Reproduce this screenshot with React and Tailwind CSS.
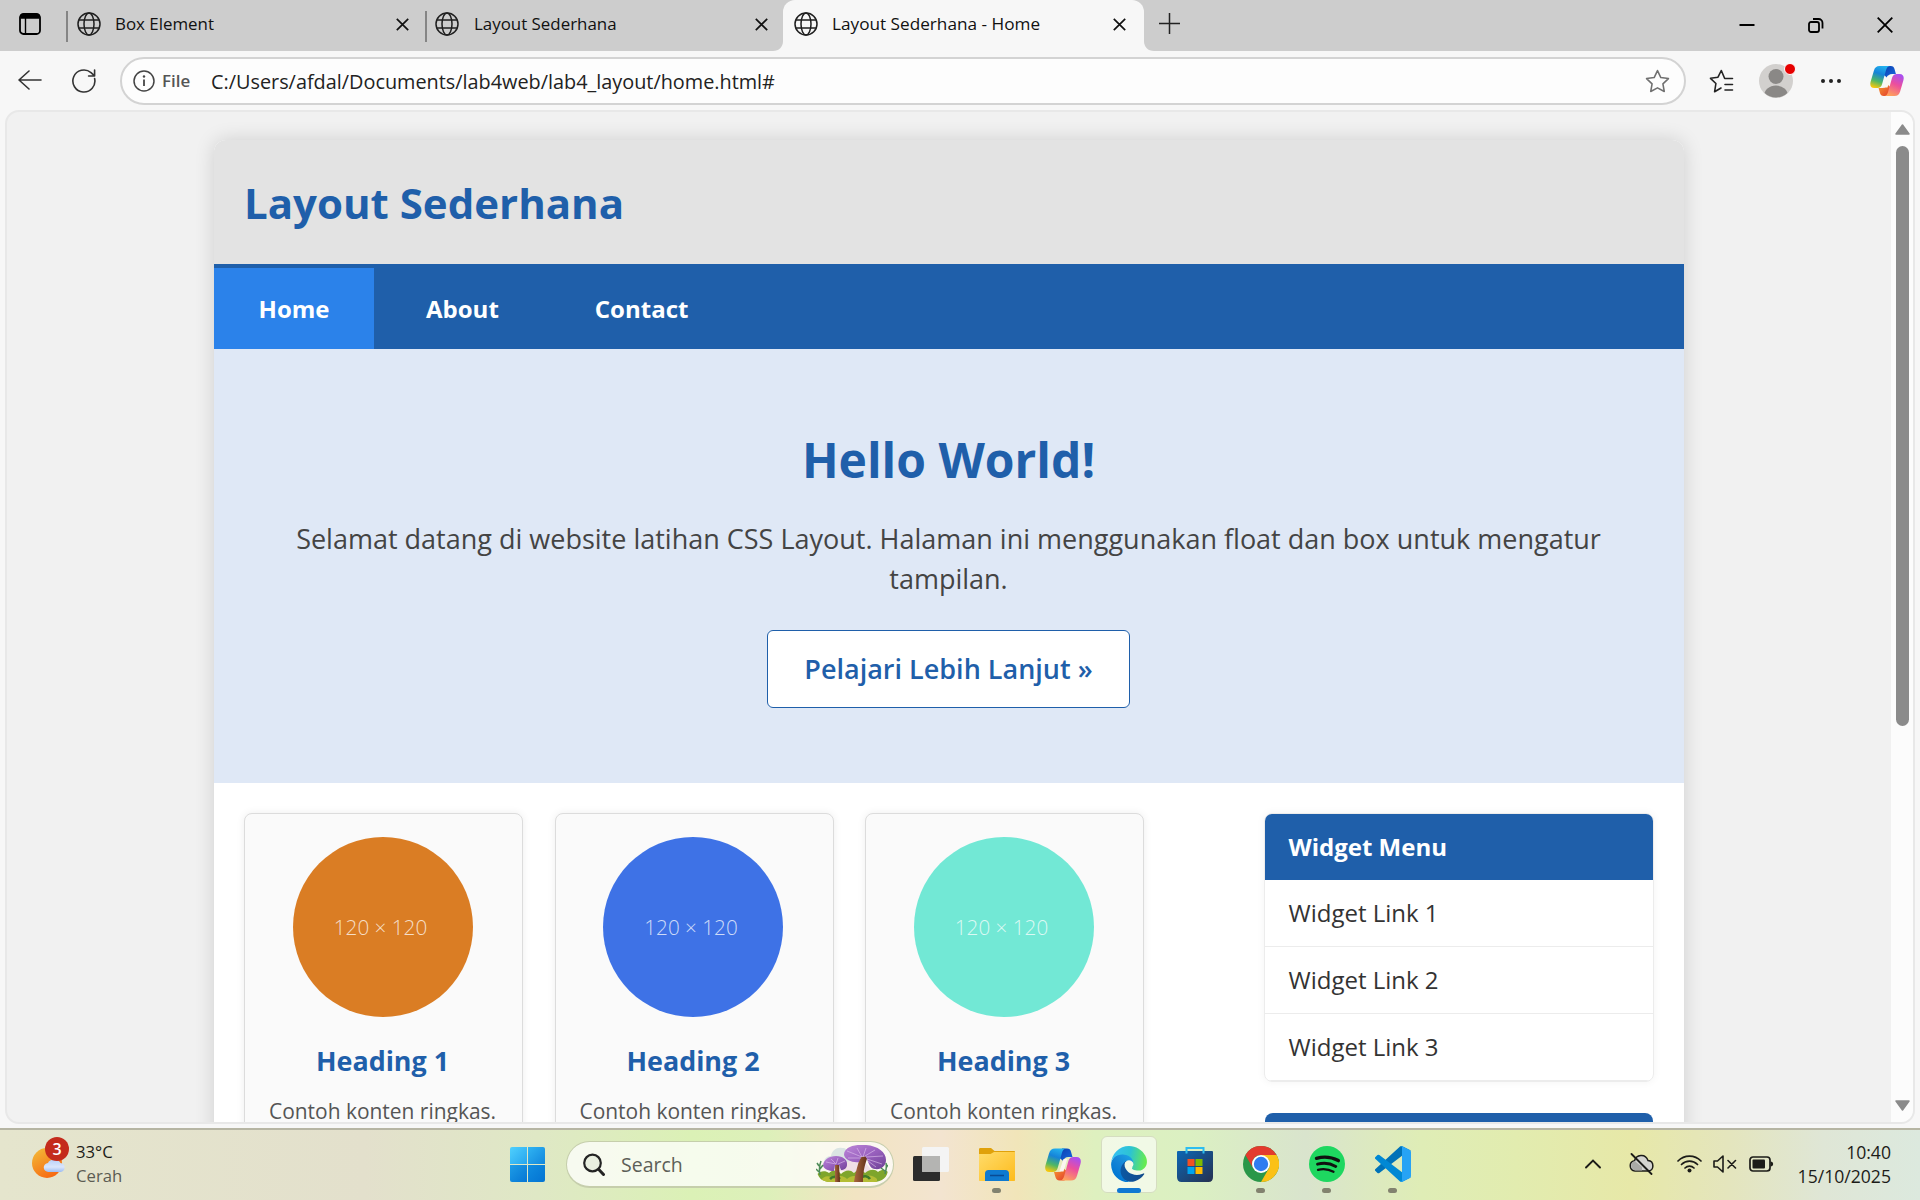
const Globe = () => (
  <svg className="h-6 w-6 shrink-0" viewBox="0 0 24 24" fill="none" stroke="#1f1f1f" strokeWidth="1.5">
    <circle cx="12" cy="12" r="11" />
    <ellipse cx="12" cy="12" rx="5" ry="11" />
    <path d="M2 8h20M2 16h20" />
  </svg>
);

const Close = () => (
  <svg className="h-[13px] w-[13px] shrink-0" viewBox="0 0 13 13" stroke="#111" strokeWidth="1.7">
    <path d="M.8.8l11.4 11.4M12.2.8L.8 12.2" />
  </svg>
);

const Copilot = ({ className, id }) => (
  <svg className={className} viewBox="0 0 36 32" fill="none">
    <defs>
      <linearGradient id={id + "a"} x1="0.6" y1="0" x2="0.3" y2="1">
        <stop offset="0" stopColor="#22b0ee" />
        <stop offset=".35" stopColor="#1683d8" />
        <stop offset=".7" stopColor="#4fb765" />
        <stop offset="1" stopColor="#f6c70d" />
      </linearGradient>
      <linearGradient id={id + "b"} x1="0.7" y1="0" x2="0.3" y2="1">
        <stop offset="0" stopColor="#a94ff0" />
        <stop offset=".45" stopColor="#ec4f9d" />
        <stop offset="1" stopColor="#ffa35a" />
      </linearGradient>
      <linearGradient id={id + "c"} x1="0" y1="0" x2="1" y2="1">
        <stop offset="0" stopColor="#0b3fae" />
        <stop offset="1" stopColor="#1769e0" />
      </linearGradient>
      <linearGradient id={id + "d"} x1="0" y1="0" x2="1" y2="1">
        <stop offset="0" stopColor="#f79b2e" />
        <stop offset="1" stopColor="#e2382d" />
      </linearGradient>
    </defs>
    <path d="M17 0h5c2.400 0 3.400 1.200 4 3.200l1.500 5.300h-4c-3 0-4.500 1.300-5.300 4L14 9z" fill={"url(#" + id + "c)"} />
    <path d="M19.500 32h-5c-2.400 0-3.400-1.200-4-3.200L9 23.500h4c3 0 4.500-1.300 5.300-4L22 23z" fill={"url(#" + id + "d)"} />
    <path d="M10 0h11c-2.300.4-3.200 1.700-4 4.300l-4.300 15.200c-.8 2.800-2.200 4-5 4H4.500C.7 23.500-.5 20.500.5 16.800L4 5C5 1.600 6.800 0 10 0z" fill={"url(#" + id + "a)"} />
    <path d="M26 32H15.500c2-.4 2.900-1.800 3.600-4.200l4.300-15.200c.8-2.800 2.200-4.100 5-4.100h3.100c3.800 0 5 3 4 6.700L32 27.200c-1 3.300-2.800 4.800-6 4.800z" fill={"url(#" + id + "b)"} />
    <path d="M18.500 10.500h3.800l-3.800 12.500h-4.200z" fill="#fbf6f0" />
  </svg>
);

const StarIcon = () => (
  <svg className="h-[25px] w-[25px] shrink-0" viewBox="0 0 24 24" fill="none" stroke="#707070" strokeWidth="1.5" strokeLinejoin="round">
    <path d="M12 1.500l3.200 6.700 7.300 1-5.300 5.100 1.300 7.300L12 18.100l-6.500 3.500 1.300-7.300L1.500 9.200l7.300-1z" />
  </svg>
);

const tabText = "leading-6 text-[#111] whitespace-nowrap";

function TabBar() {
  return (
    <div className="flex h-[51px] shrink-0 bg-[#cdcdcd]">
      <div className="flex w-[66px] justify-start pt-[13px] pl-[19px]">
        <svg className="h-[22px] w-[22px]" viewBox="0 0 22 22" fill="none" stroke="#000" strokeWidth="1.8">
          <rect x="1" y="1" width="20" height="20" rx="3.500" />
          <path d="M1.500 3.500h19" strokeWidth="4.500" />
          <path d="M6.500 5v15.500" strokeWidth="1.400" />
        </svg>
      </div>
      <div className="flex w-[359px] pt-3">
        <div className="-mt-px mr-[9px] h-[31px] w-[2px] bg-[#858585]" />
        <Globe />
        <span className={"ml-[14px] flex-1 text-[16.900px] " + tabText}>Box Element</span>
        <div className="mt-1.5 mr-4">
          <Close />
        </div>
      </div>
      <div className="flex w-[358px] pt-3">
        <div className="-mt-px mr-[8px] h-[31px] w-[2px] bg-[#858585]" />
        <Globe />
        <span className={"ml-[15px] flex-1 text-[16.900px] " + tabText}>Layout Sederhana</span>
        <div className="mt-1.5 mr-[15px]">
          <Close />
        </div>
      </div>
      <div className="relative flex w-[361px] rounded-t-[12px] bg-[#f7f7f7] pt-3 pl-[11px]">
        <svg className="absolute bottom-0 -left-[10px] h-[10px] w-[10px]" viewBox="0 0 10 10">
          <path d="M10 0v10H0C6 10 10 6 10 0z" fill="#f7f7f7" />
        </svg>
        <svg className="absolute -right-[10px] bottom-0 h-[10px] w-[10px]" viewBox="0 0 10 10">
          <path d="M0 0v10h10C4 10 0 6 0 0z" fill="#f7f7f7" />
        </svg>
        <Globe />
        <span className={"ml-[14px] flex-1 text-[17.200px] " + tabText}>Layout Sederhana - Home</span>
        <div className="mt-1.5 mr-[18px]">
          <Close />
        </div>
      </div>
      <svg className="mt-[13px] ml-[15px] h-[21px] w-[21px]" viewBox="0 0 21 21" stroke="#222" strokeWidth="1.500">
        <path d="M10.500 0v21M0 10.500h21" />
      </svg>
      <div className="ml-auto flex items-start pt-[17px] pr-[27px]">
        <svg className="mr-[53px] h-[16px] w-[16px]" viewBox="0 0 16 16" stroke="#000" strokeWidth="2">
          <path d="M.5 8h15" />
        </svg>
        <svg className="mr-[53px] h-[16px] w-[16px]" viewBox="0 0 16 16" fill="none" stroke="#000" strokeWidth="1.800">
          <rect x="1" y="5" width="10" height="10" rx="2" />
          <path d="M5 2h5.500a4 4 0 014 4v5.500" />
        </svg>
        <svg className="h-[16px] w-[16px]" viewBox="0 0 16 16" stroke="#000" strokeWidth="1.800">
          <path d="M.7.7l14.600 14.600M15.300.7L.7 15.300" />
        </svg>
      </div>
    </div>
  );
}

function Toolbar() {
  return (
    <div className="flex h-[59px] shrink-0 items-start bg-[#f7f7f7] pt-[6px]">
      <svg className="mt-[13px] ml-[18px] h-[20px] w-[24px]" viewBox="0 0 24 20" fill="none" stroke="#333" strokeWidth="1.600" strokeLinecap="round" strokeLinejoin="round">
        <path d="M23 10H1M11 1L1 10l10 9" />
      </svg>
      <svg className="mt-[12px] ml-[30px] h-[24px] w-[24px]" viewBox="0 0 24 24" fill="none" stroke="#333" strokeWidth="1.600" strokeLinecap="round" strokeLinejoin="round">
        <path d="M22.600 9.500A11 11 0 1 1 19 3.600L22.300 6.700M22.600 1v6h-6" />
      </svg>
      <div className="ml-[24px] flex h-[48px] w-[1566px] items-center rounded-full border-2 border-[#d3d3d3] bg-[#fdfdfd] pl-[11px]">
        <svg className="h-[22px] w-[22px]" viewBox="0 0 22 22" fill="none" stroke="#444" strokeWidth="1.500">
          <circle cx="11" cy="11" r="10" />
          <path d="M11 9.500v6.500" strokeWidth="1.800" />
          <circle cx="11" cy="6.500" r="1.200" fill="#444" stroke="none" />
        </svg>
        <span className="ml-[7px] w-[49px] text-[16.900px] font-semibold text-[#555]">File</span>
        <span className="mt-px flex-1 text-[19.850px] text-[#222]">C:/Users/afdal/Documents/lab4web/lab4_layout/home.html#</span>
        <div className="mr-[14px]">
          <StarIcon />
        </div>
      </div>
      <svg className="mt-[12px] ml-[23px] h-[25px] w-[25px]" viewBox="0 0 25 25" fill="none" stroke="#222" strokeWidth="1.600" strokeLinecap="round" strokeLinejoin="round">
        <path d="M23.500 9.500h-7.800L12.300 1.500 9 8.200l-7.500 1.100 5.400 5.200-1.300 8.300 6.400-3.800M16 15.500h7.500M16 21h7.500" />
      </svg>
      <div className="relative mt-[7px] ml-[25px] h-[34px] w-[34px]">
        <svg className="h-[34px] w-[34px]" viewBox="0 0 34 34">
          <defs>
            <clipPath id="avatar">
              <circle cx="17" cy="17" r="16.500" />
            </clipPath>
          </defs>
          <circle cx="17" cy="17" r="17" fill="#d2d0ce" />
          <g clipPath="url(#avatar)" fill="#8a8886">
            <circle cx="17" cy="12.500" r="7.500" />
            <ellipse cx="17" cy="32" rx="12" ry="10.500" />
          </g>
        </svg>
        <div className="absolute -top-[1px] -right-[3px] h-[12px] w-[12px] rounded-full border-[1.500px] border-white bg-[#e60000]" />
      </div>
      <div className="mt-[22px] ml-[28px] flex gap-[4px]">
        <div className="h-1 w-1 rounded-full bg-[#222]" />
        <div className="h-1 w-1 rounded-full bg-[#222]" />
        <div className="h-1 w-1 rounded-full bg-[#222]" />
      </div>
      <Copilot id="cpt" className="mt-[9px] ml-[29px] h-[30px] w-[34px]" />
    </div>
  );
}

function Card({ color, title }) {
  return (
    <div className="flex h-[420px] w-[279px] flex-col items-center rounded-[8px] border border-[#dcdcdc] bg-[#fafafa] pt-[23px] pr-[2px] shadow-[0_0_8px_rgba(0,0,0,0.07)]">
      <div className={"flex h-[180px] w-[180px] items-center justify-center rounded-full pt-px pr-[4px] text-[20.700px] font-light text-white/75 " + color}>
        120 × 120
      </div>
      <h3 className="mt-[24px] text-[26.900px] leading-[40px] font-bold text-[#1f5faa]">{title}</h3>
      <p className="mt-[15px] text-[20.950px] leading-[30px] whitespace-nowrap text-[#555]">Contoh konten ringkas.</p>
    </div>
  );
}

function Page() {
  return (
    <div className="h-[1100px] w-[1470px] shrink-0 rounded-t-[12px] bg-white shadow-[0_0_20px_rgba(0,0,0,0.14)]">
      <header className="flex h-[124px] items-center rounded-t-[12px] bg-[#e3e3e3] pl-[30px]">
        <h1 className="text-[42px] leading-[63px] font-bold text-[#1f5faa]">Layout Sederhana</h1>
      </header>
      <nav className="flex h-[85px] gap-[7px] bg-[#1f5faa] pt-[4px] text-[24px] font-bold text-white">
        <a className="flex w-[160px] items-center justify-center bg-[#2b82ea]">Home</a>
        <a className="flex items-center px-[45px]">About</a>
        <a className="-ml-px flex items-center px-[45px]">Contact</a>
      </nav>
      <section className="flex h-[434px] flex-col items-center bg-[#dfe8f6] pt-[75px] pr-[1px] text-center">
        <h2 className="text-[48px] leading-[72px] font-bold text-[#1f5faa]">Hello World!</h2>
        <p className="mt-[23px] w-[1380px] text-[27px] leading-[40px] text-[#444]">
          Selamat datang di website latihan CSS Layout. Halaman ini menggunakan float dan box untuk mengatur tampilan.
        </p>
        <a className="mt-[31px] flex h-[78px] w-[363px] items-center justify-center rounded-[6px] border border-[#1f5faa] bg-white text-[27px] font-semibold text-[#1f5faa]">
          Pelajari Lebih Lanjut »
        </a>
      </section>
      <div className="flex justify-between px-[30px] pt-[30px]">
        <div className="flex gap-[31.500px]">
          <Card color="bg-[#da7d24]" title="Heading 1" />
          <Card color="bg-[#3e72e6]" title="Heading 2" />
          <Card color="bg-[#72e8d5]" title="Heading 3" />
        </div>
        <aside className="flex w-[390px] flex-col gap-[31px] text-[24px]">
          <div className="overflow-hidden rounded-[8px] border border-[#ececec] shadow-[0_0_8px_rgba(0,0,0,0.05)]">
            <div className="flex h-[66px] items-center bg-[#1f5faa] pl-[23.500px] font-bold text-white">Widget Menu</div>
            <div className="flex h-[67px] items-center border-b border-[#ececec] pl-[23.500px] text-[#333]">Widget Link 1</div>
            <div className="flex h-[67px] items-center border-b border-[#ececec] pl-[23.500px] text-[#333]">Widget Link 2</div>
            <div className="flex h-[67px] items-center border-b border-[#ececec] pl-[23.500px] text-[#333]">Widget Link 3</div>
          </div>
          <div className="mx-px h-[66px] rounded-[8px] bg-[#1f5faa]" />
        </aside>
      </div>
    </div>
  );
}

function Viewport() {
  return (
    <div className="flex h-[1018px] shrink-0 bg-[#f7f7f7] px-[5px]">
      <div className="flex h-[1014px] w-[1910px] overflow-hidden rounded-[14px] border-2 border-[#e8e8e8] bg-[#f1f1f1]">
        <div className="flex flex-1 pt-[28px] pl-[207px]">
          <Page />
        </div>
        <div className="flex w-[22px] shrink-0 flex-col items-center bg-[#fcfcfc] pt-[12px] pb-[11px]">
          <svg className="h-[11px] w-[15px] shrink-0" viewBox="0 0 15 11" fill="#8b8b8b" stroke="#8b8b8b" strokeWidth="1.500" strokeLinejoin="round">
            <path d="M7.500 1L14 10H1z" />
          </svg>
          <div className="mt-[11px] h-[580px] w-[13px] shrink-0 rounded-full bg-[#8b8b8b]" />
          <svg className="mt-auto h-[11px] w-[15px] shrink-0" viewBox="0 0 15 11" fill="#8b8b8b" stroke="#8b8b8b" strokeWidth="1.500" strokeLinejoin="round">
            <path d="M7.500 10L14 1H1z" />
          </svg>
        </div>
      </div>
    </div>
  );
}

const Mushrooms = () => (
  <svg className="h-[38px] w-[72px]" viewBox="0 0 72 38">
    <defs>
      <linearGradient id="cap" x1="0" y1="0" x2="1" y2="1">
        <stop offset="0" stopColor="#bd88d8" />
        <stop offset=".5" stopColor="#9a62bf" />
        <stop offset="1" stopColor="#6f4196" />
      </linearGradient>
      <linearGradient id="stem" x1="0" y1="0" x2="1" y2="0">
        <stop offset="0" stopColor="#a8683f" />
        <stop offset="1" stopColor="#5f2d16" />
      </linearGradient>
      <clipPath id="scene">
        <path d="M0 0h72v24c0 8-6 13-14 13H14C6 37 1 32 1 25z" />
      </clipPath>
    </defs>
    <g clipPath="url(#scene)">
      <path d="M8 20c-1-6 3-9 7-9 1-6 6-9 11-8 4 0 6 2 7 5l20 16H10z" fill="#dbe5e3" />
      <path d="M24 26c4-10 12-12 24-10l10 12z" fill="#f0dfe6" />
      <path d="M0 30c4-4 9-5 13-2 4-4 9-3 12 1 4-4 9-5 13-1 4-4 8-3 11 0 5-4 10-4 13-1 4-3 8-2 10 0v12H0z" fill="#7ea52c" />
      <path d="M4 36c4-6 10-6 14-2 5-5 10-3 13 0 5-5 11-3 14 0 5-5 12-4 16 0v5H4z" fill="#b4bd35" />
      <path d="M14 34c3-3 7-3 10 0M44 33c4-3 8-2 10 1" stroke="#3f7a2b" strokeWidth="2.500" fill="none" />
      <path d="M19 19h4l1 18h-5z" fill="url(#stem)" />
      <path d="M44 12l8-1c-3 8-5 15-5 26h-9c1-9 4-17 6-25z" fill="url(#stem)" />
      <path d="M7 21c0-6 6-10 13-10s12 4 11 9c0 3-3 5-6 5l-2-5h-4l-1 6c-5 0-10-2-11-5z" fill="url(#cap)" />
      <path d="M28 10C28 2 38-1 50 0c12 1 20 7 20 15 0 6-5 10-11 9-4 0-6-4-8-10l-2-3-4 1-2 5c-6 1-14-2-15-7z" fill="url(#cap)" />
      <path d="M46 12L31 6M46 12L41 3M47 12l3-9M49 11l10-6M50 12l17-1M51 14l15 5M52 16l8 6M45 13l-13 0M20 19L10 17M20 19l-5-5M20 19l2-6M22 19l7-3" stroke="#dfc3ee" strokeWidth=".8" opacity=".75" />
    </g>
    <path d="M4 30c-1-5-1-9 1-14M3 27l-3-3M4 24l3-4M3 21l-2-3M69 29c1-4 2-6 1-11M69 26l-4-3M70 23l2-3" stroke="#4d8b57" strokeWidth="1.500" fill="none" />
  </svg>
);

const Edge = () => (
  <svg className="h-[36px] w-[36px] shrink-0" viewBox="4 0 257 257">
    <defs>
      <linearGradient id="e1" x1="60" y1="178" x2="241" y2="178" gradientUnits="userSpaceOnUse">
        <stop offset="0" stopColor="#0c59a4" />
        <stop offset="1" stopColor="#114a8b" />
      </linearGradient>
      <linearGradient id="e2" x1="157" y1="100" x2="46" y2="222" gradientUnits="userSpaceOnUse">
        <stop offset="0" stopColor="#1b9de2" />
        <stop offset=".5" stopColor="#1484d6" />
        <stop offset="1" stopColor="#0078d4" />
      </linearGradient>
      <linearGradient id="e3" x1="20" y1="70" x2="250" y2="110" gradientUnits="userSpaceOnUse">
        <stop offset="0" stopColor="#35c1f1" />
        <stop offset=".5" stopColor="#2cc3d2" />
        <stop offset="1" stopColor="#66eb50" />
      </linearGradient>
    </defs>
    <path fill="url(#e1)" d="M235.680 195.460a93.730 93.730 0 0 1-10.540 4.710 101.870 101.870 0 0 1-35.900 6.460c-47.320 0-88.540-32.550-88.540-74.320A31.480 31.480 0 0 1 117.130 104.960c-42.800 1.800-53.800 46.400-53.800 72.530 0 73.880 68.090 78.500 82.760 78.500 7.910 0 19.840-2.300 27-4.560l1.310-.44a128.340 128.340 0 0 0 66.600-50 4 4 0 0 0-5.320-5.530z" />
    <path fill="url(#e2)" d="M110.340 246.340A79.200 79.200 0 0 1 87.600 225a80.720 80.720 0 0 1 29.530-120c3.120-1.470 8.450-4.130 15.540-4a32.350 32.350 0 0 1 25.690 13 31.880 31.880 0 0 1 6.360 18.660c0-.21 24.460-79.600-80-79.600-43.900 0-80 41.660-80 78.210a130.150 130.150 0 0 0 12.110 56 128 128 0 0 0 156.380 65.500 75.550 75.550 0 0 1-62.780-8z" />
    <path fill="url(#e3)" d="M156.940 153.780c-.81 1.050-3.300 2.500-3.300 5.660 0 2.610 1.700 5.120 4.720 7.230 14.380 10 41.490 8.680 41.560 8.680a59.560 59.560 0 0 0 30.270-8.350 61.380 61.380 0 0 0 30.430-52.880c.26-22.410-8-37.310-11.340-43.910C228.090 28.760 182.350.2 132.610.2a128 128 0 0 0-128 126.200c.48-36.540 36.800-66.050 80-66.050 3.500 0 23.460.34 42 10.070 16.340 8.580 24.900 18.940 30.850 29.210 6.180 10.670 7.280 24.150 7.280 29.520s-2.740 13.330-7.800 19.830z" />
  </svg>
);

const Folder = () => (
  <svg className="h-[33px] w-[36px]" viewBox="0 0 36 33">
    <defs>
      <linearGradient id="fo" x1="0" y1="0" x2="1" y2="1">
        <stop offset="0" stopColor="#ffdc6b" />
        <stop offset="1" stopColor="#fdbb1c" />
      </linearGradient>
    </defs>
    <path d="M0 1.500C0 .5.500 0 1.500 0H12l3.500 3h19.500c.6 0 1 .4 1 1V12H0z" fill="#e0a10a" />
    <path d="M0 6h11.500l3.500-2h21V32c0 .6-.4 1-1 1H1c-.6 0-1-.4-1-1z" fill="url(#fo)" />
    <path d="M6 33v-7.500c0-2.200 1.300-3.500 3.500-3.500h17c2.200 0 3.500 1.300 3.500 3.500V33z" fill="#0f7ad0" />
    <path d="M11 27.500h14" stroke="#0a4b93" strokeWidth="1.500" />
  </svg>
);

const Store = () => (
  <svg className="h-[36px] w-[36px]" viewBox="0 0 36 36">
    <defs>
      <linearGradient id="st" x1="0" y1="0" x2="1" y2="1">
        <stop offset="0" stopColor="#0c67b5" />
        <stop offset="1" stopColor="#26304f" />
      </linearGradient>
    </defs>
    <path d="M0 6q0-1 1-1h34q1 0 1 1v25c0 3-1.500 5-4.500 5h-27C1.500 36 0 34 0 31z" fill="url(#st)" />
    <path d="M9.500 7.500V2h17v5.500" fill="none" stroke="#2cbdf0" strokeWidth="2" />
    <path d="M10.500 13h7v7h-7z" fill="#f25022" />
    <path d="M18.500 13h7v7h-7z" fill="#7fba00" />
    <path d="M10.500 21h7v7h-7z" fill="#00a4ef" />
    <path d="M18.500 21h7v7h-7z" fill="#ffb900" />
  </svg>
);

const Chrome = () => (
  <svg className="h-[36px] w-[36px]" viewBox="0 0 36 36">
    <circle cx="18" cy="18" r="18" fill="#2a9749" />
    <path d="M2.410 9A18 18 0 0 1 33.590 9H18a9 9 0 0 0-7.800 13.500z" fill="#e33b2e" />
    <path d="M33.590 9A18 18 0 0 1 18 36l7.800-13.500A9 9 0 0 0 25.800 13.500L18 9z" fill="#fbc116" />
    <circle cx="18" cy="18" r="9" fill="#fff" />
    <circle cx="18" cy="18" r="7.200" fill="#2f7cf0" />
  </svg>
);

const Spotify = () => (
  <svg className="h-[36px] w-[36px]" viewBox="0 0 36 36" fill="none" stroke="#101010" strokeLinecap="round">
    <circle cx="18" cy="18" r="18" fill="#1ed760" stroke="none" />
    <path d="M7.500 12.300c7.500-2.100 15-1.400 21.800 2.300" strokeWidth="3.400" />
    <path d="M8.500 18.200c6.500-1.800 12.700-1 18.300 2.200" strokeWidth="2.900" />
    <path d="M9 23.800c5.500-1.300 10.500-.8 15.500 2" strokeWidth="2.300" />
  </svg>
);

const Code = () => (
  <svg className="h-[36px] w-[36px]" viewBox="0 0 100 100">
    <path fill="#0072b8" d="M96.460 10.800L75.860.88a6.230 6.230 0 0 0-7.110 1.200L1.300 63.580a4.170 4.170 0 0 0 0 6.170l5.510 5a4.170 4.170 0 0 0 5.320.24L93.360 13.370A4.130 4.130 0 0 1 100 16.670v-.24c0-2.400-1.380-4.590-3.540-5.630z" />
    <path fill="#0088d4" d="M96.460 89.200l-20.600 9.920a6.230 6.230 0 0 1-7.110-1.200L1.300 36.420a4.170 4.170 0 0 1 0-6.170l5.510-5a4.170 4.170 0 0 1 5.320-.24l81.230 61.620a4.130 4.130 0 0 0 6.640-3.300v.24c0 2.400-1.380 4.590-3.540 5.630z" />
    <path fill="#27a3f5" d="M75.860 99.130a6.230 6.230 0 0 1-7.110-1.210C71.060 100.220 75 98.590 75 95.330V4.670c0-3.260-3.940-4.890-6.250-2.590a6.230 6.230 0 0 1 7.110-1.210l20.600 9.910A6.250 6.250 0 0 1 100 16.410v67.180a6.250 6.250 0 0 1-3.540 5.630z" />
  </svg>
);

const TaskView = () => (
  <svg className="h-[34px] w-[36px]" viewBox="0 0 36 34">
    <rect x="0" y="9" width="27" height="25" rx="1.500" fill="#2c2c2c" />
    <rect x="9" y="0" width="27" height="25" rx="1.500" fill="#f4f4f4" />
    <path d="M9 9h18v16H10.500Q9 25 9 23.500z" fill="#b4b4b2" />
  </svg>
);

const Slot = ({ children, running }) => (
  <div className="flex h-[70px] w-[66px] flex-col items-center pt-[6px] pr-[1px]">
    <div className="flex h-[56px] w-[56px] items-center justify-center">{children}</div>
    {running && <div className="-mt-[4px] h-[5px] w-[9px] rounded-full bg-[#82826f]" />}
  </div>
);

function Taskbar() {
  return (
    <div className="flex h-[72px] shrink-0 border-t-2 border-[#b6b5a3] bg-[linear-gradient(90deg,#e5e5cd_0%,#e3e0cc_19%,#dfe8c5_28%,#dbf1b6_36%,#ddf0ba_40%,#f2e4c2_44.500%,#f3e4d0_49%,#f1e5b9_53%,#def0bf_57%,#dbf0c2_62%,#d9e4cd_68%,#dfedb6_74%,#e2ecaf_79%,#e7e8a8_85%,#e4e5bd_90%,#dfe6d6_95%,#dce9de_100%)]">
      <div className="flex w-[494px] pt-[7px] pl-[32px]">
        <div className="relative h-[42px] w-[39px]">
          <svg className="h-[42px] w-[39px]" viewBox="0 0 39 42">
            <defs>
              <linearGradient id="sun" x1="0" y1="0" x2=".6" y2="1">
                <stop offset="0" stopColor="#f3bf3a" />
                <stop offset="1" stopColor="#f66a12" />
              </linearGradient>
              <linearGradient id="cloud" x1="0" y1="0" x2="0" y2="1">
                <stop offset="0" stopColor="#b8d0fa" />
                <stop offset=".6" stopColor="#dbe6fb" />
                <stop offset="1" stopColor="#9dbcf2" />
              </linearGradient>
            </defs>
            <circle cx="15" cy="26" r="15" fill="url(#sun)" />
            <path d="M16.500 35a4.500 4.500 0 0 1-.5-9c1-4 10-5.500 12.500 0 5.500 0 5.500 9 0 9z" fill="url(#cloud)" />
          </svg>
          <div className="absolute top-0 left-[13px] flex h-[24px] w-[24px] items-center justify-center rounded-full bg-[#c42b1c] text-[16px] leading-none font-semibold text-white">
            3
          </div>
        </div>
        <div className="ml-[5px] pt-[3px] text-[16.700px] leading-[24px]">
          <div className="text-[#1c1c18]">33°C</div>
          <div className="text-[#5c5c52]">Cerah</div>
        </div>
      </div>
      <div className="flex">
        <div className="mt-[17px] ml-[16px] grid h-[35px] w-[35px] grid-cols-2 gap-[1px]">
          <div className="rounded-tl-[2px] bg-linear-to-br from-[#4fd0fd] to-[#25a5ee]" />
          <div className="rounded-tr-[2px] bg-linear-to-br from-[#30b4f2] to-[#1187dd]" />
          <div className="rounded-bl-[2px] bg-linear-to-br from-[#1e9ce6] to-[#0676d4]" />
          <div className="rounded-br-[2px] bg-linear-to-br from-[#108de0] to-[#0573d2]" />
        </div>
        <div className="mt-[11px] ml-[21px] flex h-[47px] w-[328px] items-center rounded-full border border-b-2 border-[#b9c39b]/80 bg-white/75 pl-[16px]">
          <svg className="h-[23px] w-[22px]" viewBox="0 0 22 23" fill="#e9efe0" stroke="#242424" strokeWidth="2.200" strokeLinecap="round">
            <circle cx="9.500" cy="10" r="8.300" />
            <path d="M15.800 16.500l4.700 5" strokeWidth="3" />
          </svg>
          <span className="mt-px ml-[16px] flex-1 text-[19.500px] text-[#5d5f58]">Search</span>
          <div className="mr-[5px]">
            <Mushrooms />
          </div>
        </div>
      </div>
      <div className="ml-[4px] flex">
        <Slot>
          <TaskView />
        </Slot>
        <Slot running>
          <Folder />
        </Slot>
        <Slot>
          <Copilot id="cpb" className="h-[33px] w-[36px]" />
        </Slot>
        <div className="flex h-[70px] w-[66px] justify-center pt-[6px] pr-[1px]">
          <div className="flex h-[57px] w-[56px] flex-col items-center rounded-[6px] border border-[#d5ddc0] bg-white/60 pt-[9px]">
            <Edge />
            <div className="mt-[6px] h-[5px] w-[24px] shrink-0 rounded-full bg-[#0f78d2]" />
          </div>
        </div>
        <Slot>
          <Store />
        </Slot>
        <Slot running>
          <Chrome />
        </Slot>
        <Slot running>
          <Spotify />
        </Slot>
        <Slot running>
          <Code />
        </Slot>
      </div>
      <div className="ml-auto flex items-start pr-[29px]">
        <svg className="mt-[29px] h-[10px] w-[16px]" viewBox="0 0 16 10" fill="none" stroke="#1c1c18" strokeWidth="1.900" strokeLinecap="round">
          <path d="M1 8.500l7-7 7 7" />
        </svg>
        <svg className="mt-[22px] ml-[28px] h-[23px] w-[25px]" viewBox="0 0 25 23" fill="none" stroke="#1c1c18" strokeWidth="1.500" strokeLinecap="round">
          <path d="M6 19a5.200 5.200 0 0 1-.5-10.300C7 2.500 16.500 1 19 8.500c6.500.5 6.500 10.500 0 10.500z" fill="#d4d4d0" />
          <path d="M6 18.500a5 5 0 0 1-.3-9.600L13 15v3.500z" fill="#a9a9a6" stroke="none" />
          <path d="M2.500 2l20 20" strokeWidth="1.800" />
        </svg>
        <svg className="mt-[24px] ml-[23px] h-[19px] w-[25px]" viewBox="0 0 25 19" fill="none" stroke="#1c1c18" strokeWidth="1.700" strokeLinecap="round">
          <path d="M1 7a16 16 0 0 1 23 0M4.500 10.500a11.400 11.400 0 0 1 16 0M8 14a6.400 6.400 0 0 1 9 0" />
          <circle cx="12.500" cy="16.500" r="2" fill="#1c1c18" stroke="none" />
        </svg>
        <svg className="mt-[25px] ml-[11px] h-[18px] w-[24px]" viewBox="0 0 24 18" fill="none" stroke="#1c1c18" strokeWidth="1.600" strokeLinecap="round" strokeLinejoin="round">
          <path d="M1 6v6h3.500l5.500 5V1L4.500 6zM15 5.500l7.500 7.500M22.500 5.500L15 13" />
        </svg>
        <svg className="mt-[26px] ml-[12px] h-[16px] w-[25px]" viewBox="0 0 25 16" fill="none" stroke="#1c1c18" strokeWidth="1.700">
          <rect x="1" y="1" width="20" height="14" rx="3" />
          <rect x="3.500" y="3.500" width="12.500" height="9" rx="1" fill="#1c1c18" stroke="none" />
          <path d="M21.500 5.500c3.500 0 3.500 5 0 5z" fill="#1c1c18" stroke="none" />
        </svg>
        <div className="mt-[10px] ml-[24px] text-right text-[17.600px] leading-[24px] text-[#1c1c18]">
          <div>10:40</div>
          <div>15/10/2025</div>
        </div>
      </div>
    </div>
  );
}

export default function App() {
  return (
    <div className="flex h-[1200px] w-[1920px] flex-col overflow-hidden bg-[#f7f7f7] font-['Open_Sans','Noto_Sans',sans-serif]">
      <TabBar />
      <Toolbar />
      <Viewport />
      <Taskbar />
    </div>
  );
}
